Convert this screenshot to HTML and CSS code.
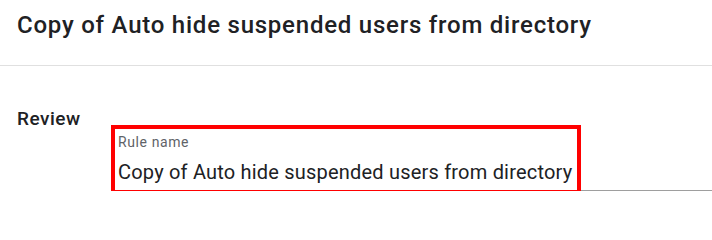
FILE: index.html
```html
<!DOCTYPE html>
<html lang="en">
<head>
<meta charset="utf-8">
<title>Copy of Auto hide suspended users from directory</title>
<link rel="stylesheet" href="styles.css">
</head>
<body>
  <header class="page-header">
    <h1 class="page-title">Copy of Auto hide suspended users from directory</h1>
  </header>
  <section class="review">
    <h2 class="review-title">Review</h2>
    <div class="field">
      <div class="field-box">
        <div class="field-label">Rule name</div>
        <div class="field-value">Copy of Auto hide suspended users from directory</div>
      </div>
    </div>
  </section>
</body>
</html>
```

FILE: styles.css
```css
html, body {
  margin: 0;
  padding: 0;
  background: #ffffff;
  font-family: Roboto, "Liberation Sans", Arial, sans-serif;
  color: #202124;
}

.page-header {
  padding: 11px 17px 0;
  height: 54px;
  border-bottom: 1px solid #e0e0e0;
}

.page-title {
  margin: 0;
  font-size: 24px;
  line-height: 28px;
  font-weight: 500;
  letter-spacing: 0.77px;
  color: #202124;
  white-space: nowrap;
}

.review {
  display: flex;
  align-items: flex-start;
  padding: 41px 0 0 17px;
}

.review-title {
  width: 94px;
  flex: none;
  margin: 0;
  font-size: 19px;
  line-height: 24px;
  font-weight: 500;
  letter-spacing: 0.5px;
  color: #202124;
}

.field {
  flex: 1;
  margin-top: 18px;
  border-bottom: 1px solid #9e9e9e;
  height: 65px;
}

.field-box {
  display: inline-block;
  border: 4px solid #ff0000;
  padding: 4.5px 5px 6px 3px;
  background: #ffffff;
}

.field-label {
  font-size: 14px;
  line-height: 16px;
  letter-spacing: 0.6px;
  color: #5f6368;
  margin-bottom: 10px;
}

.field-value {
  font-size: 20px;
  line-height: 24px;
  letter-spacing: 0.2px;
  color: #202124;
  white-space: nowrap;
}
```
